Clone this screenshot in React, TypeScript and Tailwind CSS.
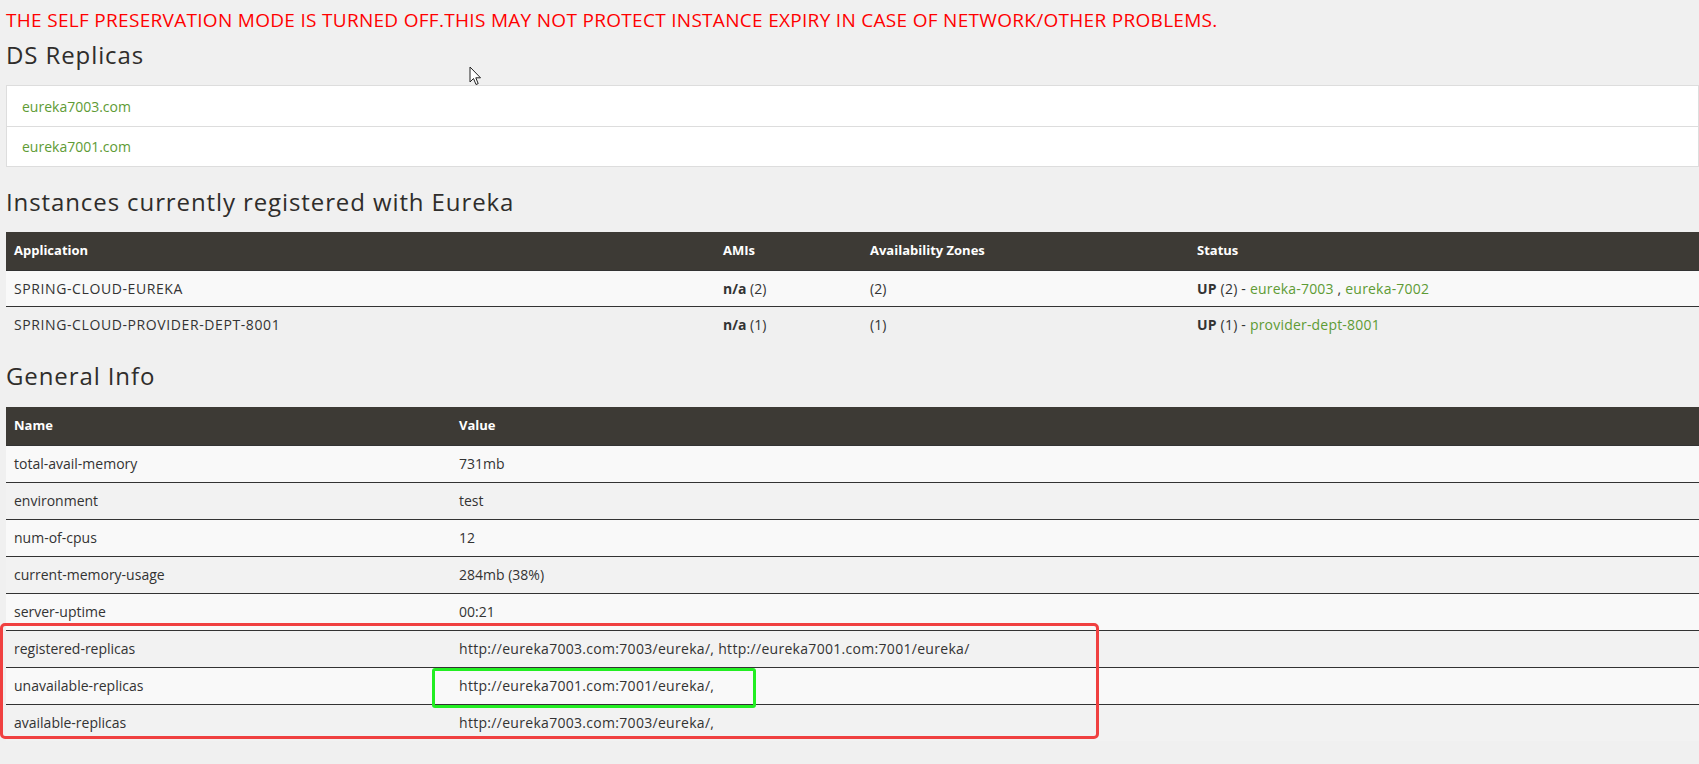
import React from "react";

// Eureka dashboard: replica list, registered instances, general info.
const FONT = { fontFamily: '"Open Sans", "Liberation Sans", sans-serif' };

const replicas = ["eureka7003.com", "eureka7001.com"];

const instances = [
  {
    app: "SPRING-CLOUD-EUREKA",
    count: 2,
    links: ["eureka-7003", "eureka-7002"],
  },
  {
    app: "SPRING-CLOUD-PROVIDER-DEPT-8001",
    count: 1,
    links: ["provider-dept-8001"],
  },
];

const info: [string, string][] = [
  ["total-avail-memory", "731mb"],
  ["environment", "test"],
  ["num-of-cpus", "12"],
  ["current-memory-usage", "284mb (38%)"],
  ["server-uptime", "00:21"],
  ["registered-replicas", "http://eureka7003.com:7003/eureka/, http://eureka7001.com:7001/eureka/"],
  ["unavailable-replicas", "http://eureka7001.com:7001/eureka/,"],
  ["available-replicas", "http://eureka7003.com:7003/eureka/,"],
];

function Heading({ children, className }: { children: React.ReactNode; className?: string }) {
  return (
    <h2 className={"text-[24px] leading-[30px] tracking-[0.9px] text-[#2f2d2b] " + (className ?? "")}>
      {children}
    </h2>
  );
}

function Cursor() {
  return (
    <svg
      className="absolute left-[469px] top-[66px]"
      width="13"
      height="20"
      viewBox="0 0 13 20"
      aria-hidden="true"
    >
      <path
        d="M1 1 L1 16 L4.5 12.5 L7 18.5 L9.2 17.6 L6.8 11.8 L11.5 11.8 Z"
        fill="#fff"
        stroke="#222"
        strokeWidth="1"
        strokeLinejoin="round"
      />
    </svg>
  );
}

export default function App() {
  return (
    <div
      className="relative min-h-screen w-full overflow-hidden bg-[#f0f0f0] pl-[6px] pt-[8px] text-[14px] text-[#333]"
      style={FONT}
    >
      <p className="text-[19px] leading-[24px] tracking-[0.3px] text-[#ff0000] whitespace-nowrap">
        THE SELF PRESERVATION MODE IS TURNED OFF.THIS MAY NOT PROTECT INSTANCE EXPIRY IN CASE OF NETWORK/OTHER PROBLEMS.
      </p>

      <Heading className="mt-[8px]">DS Replicas</Heading>
      <ul className="mt-[15px] border border-[#ddd] bg-white">
        {replicas.map((r, i) => (
          <li
            key={r}
            className={
              "flex h-[40px] items-center pl-[15px] text-[#5e9b35] " +
              (i > 0 ? "border-t border-[#ddd]" : "")
            }
          >
            {r}
          </li>
        ))}
      </ul>

      <Heading className="mt-[20px]">Instances currently registered with Eureka</Heading>
      <table className="mt-[15px] w-full border-collapse">
        <thead>
          <tr className="h-[38px] bg-[#3d3a35] text-left text-[13px] text-white">
            <th className="w-[709px] pl-[8px] font-bold">Application</th>
            <th className="w-[147px] pl-[8px] font-bold">AMIs</th>
            <th className="w-[327px] pl-[8px] font-bold">Availability Zones</th>
            <th className="pl-[8px] font-bold">Status</th>
          </tr>
        </thead>
        <tbody>
          {instances.map((row, i) => (
            <tr
              key={row.app}
              className={
                "h-[36px] border-t border-[#333] " + (i % 2 === 0 ? "bg-[#f9f9f9]" : "")
              }
            >
              <td className="pl-[8px] tracking-[0.6px]">{row.app}</td>
              <td className="pl-[8px]">
                <b>n/a</b> ({row.count})
              </td>
              <td className="pl-[8px]">({row.count})</td>
              <td className="pl-[8px] tracking-[0.2px]">
                <b>UP</b> ({row.count}) -{" "}
                {row.links.map((l, j) => (
                  <React.Fragment key={l}>
                    {j > 0 && " , "}
                    <span className="text-[#5e9b35]">{l}</span>
                  </React.Fragment>
                ))}
              </td>
            </tr>
          ))}
        </tbody>
      </table>

      <Heading className="mt-[19px]">General Info</Heading>
      <table className="mt-[16px] w-full border-collapse">
        <thead>
          <tr className="h-[38px] bg-[#3d3a35] text-left text-[13px] text-white">
            <th className="w-[445px] pl-[8px] font-bold">Name</th>
            <th className="pl-[8px] font-bold">Value</th>
          </tr>
        </thead>
        <tbody>
          {info.map(([k, v], i) => (
            <tr
              key={k}
              className={
                "h-[37px] border-t border-[#333] " +
                (i % 2 === 0 ? "bg-[#f9f9f9]" : "bg-[#f2f2f2]")
              }
            >
              <td className="pl-[8px]">{k}</td>
              <td className={"pl-[8px] " + (v.startsWith("http") ? "tracking-[0.3px]" : "")}>
                {v}
              </td>
            </tr>
          ))}
        </tbody>
      </table>

      {/* annotation boxes drawn over the screenshot */}
      <div className="pointer-events-none absolute left-0 top-[623px] h-[116px] w-[1099px] rounded-[5px] border-[3px] border-[#f04040]" />
      <div className="pointer-events-none absolute left-[432px] top-[668px] h-[40px] w-[324px] rounded-[3px] border-[3px] border-[#22ee22]" />

      <Cursor />
    </div>
  );
}
